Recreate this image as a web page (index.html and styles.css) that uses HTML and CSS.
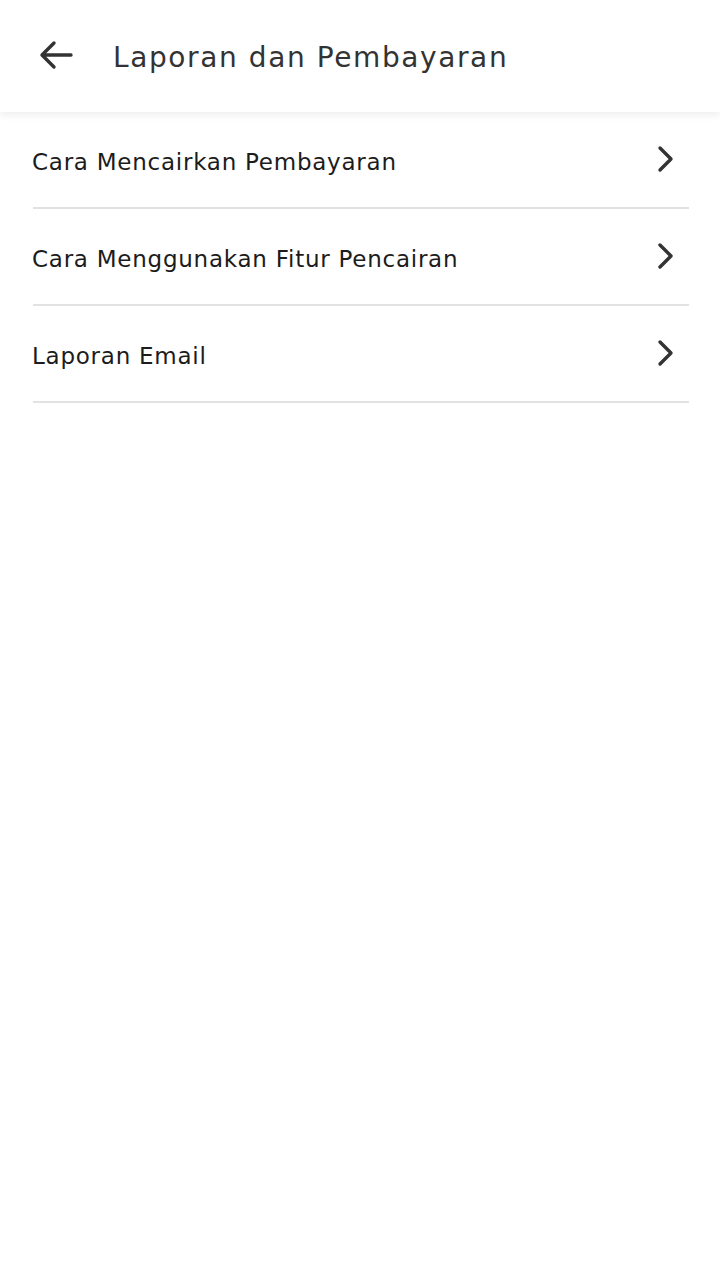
FILE: index.html
```html
<!DOCTYPE html>
<html>
<head>
<meta charset="utf-8">
<link rel="stylesheet" href="styles.css">
</head>
<body>
<header class="appbar">
  <span class="back">
    <svg width="34" height="30" viewBox="0 0 34 30"><path d="M32 15H3M15 3L3 15l12 12" fill="none" stroke="#333" stroke-width="3.4" stroke-linecap="round" stroke-linejoin="round"/></svg>
  </span>
  <h1 class="title">Laporan dan Pembayaran</h1>
</header>
<main class="list">
  <div class="item"><span class="label">Cara Mencairkan Pembayaran</span><svg class="chev" width="20" height="28" viewBox="0 0 20 28"><path d="M4 3l11 11L4 25" fill="none" stroke="#333" stroke-width="3.4" stroke-linecap="round" stroke-linejoin="round"/></svg></div>
  <div class="item"><span class="label">Cara Menggunakan Fitur Pencairan</span><svg class="chev" width="20" height="28" viewBox="0 0 20 28"><path d="M4 3l11 11L4 25" fill="none" stroke="#333" stroke-width="3.4" stroke-linecap="round" stroke-linejoin="round"/></svg></div>
  <div class="item"><span class="label">Laporan Email</span><svg class="chev" width="20" height="28" viewBox="0 0 20 28"><path d="M4 3l11 11L4 25" fill="none" stroke="#333" stroke-width="3.4" stroke-linecap="round" stroke-linejoin="round"/></svg></div>
</main>
</body>
</html>
```
FILE: styles.css
```css
html, body { margin: 0; padding: 0; background: #fff; }
body { font-family: "DejaVu Sans", "Noto Sans", sans-serif; width: 720px; height: 1280px; overflow: hidden; }
.appbar {
  height: 112px;
  display: flex;
  align-items: center;
  background: #fff;
  box-shadow: 0 3px 8px rgba(0,0,0,0.07);
  position: relative;
}
.back { width: 34px; height: 30px; margin-left: 39px; margin-right: 40px; display: flex; margin-top: -2px; }
.title { margin: 0; font-size: 28px; font-weight: normal; color: #333; letter-spacing: 1.6px; padding-top: 2px; }
.list { padding: 0 31px 0 33px; }
.item {
  height: 95px;
  border-bottom: 2px solid #e2e2e2;
  display: flex;
  align-items: center;
  justify-content: space-between;
}
.label { font-size: 23px; color: #1c1c1c; margin-left: -1px; padding-top: 4px; letter-spacing: 0.75px; }
.chev { margin-right: 13px; margin-top: -2px; }
```
